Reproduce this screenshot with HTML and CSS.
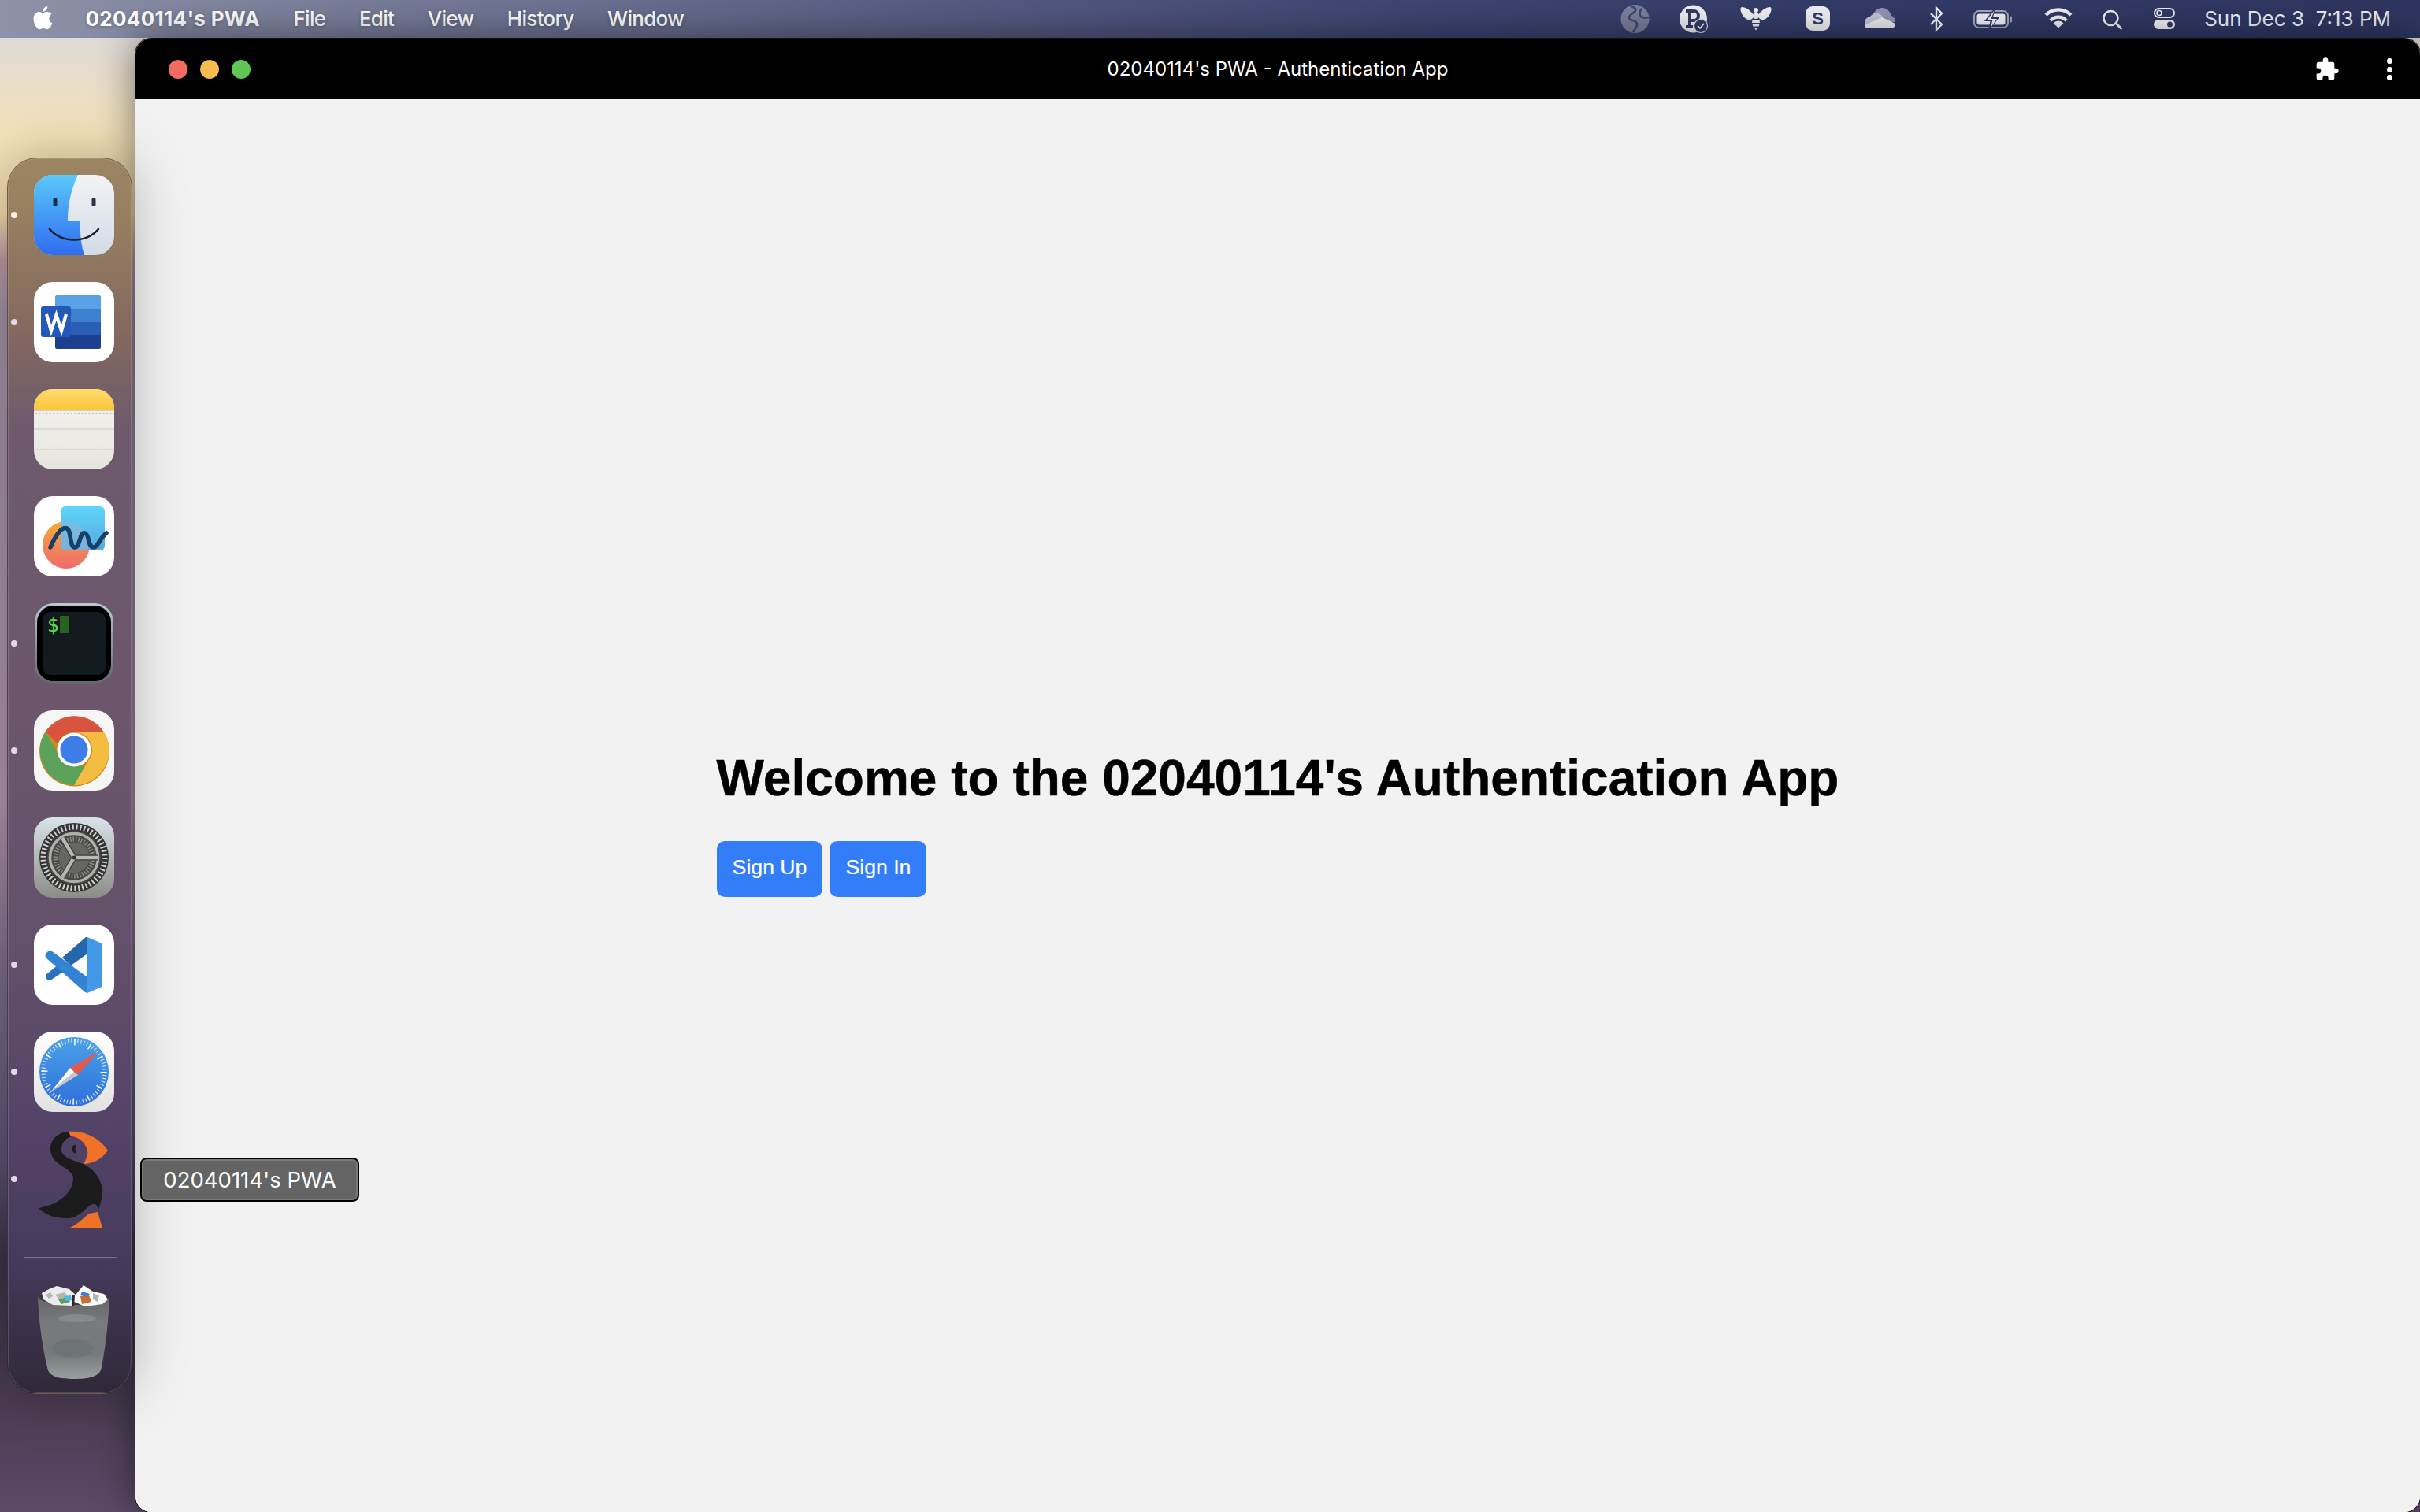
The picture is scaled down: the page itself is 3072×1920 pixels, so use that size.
FILE: index.html
```html
<!DOCTYPE html>
<html lang="en">
<head>
<meta charset="utf-8">
<title>02040114's PWA - Authentication App</title>
<link rel="stylesheet" href="styles.css">
</head>
<body>
<div class="desktop">
  <header class="menubar">
    <nav class="menu">
      <svg class="apple" viewBox="3.5 2.5 21.5 28"><path fill="#fff" d="M21.6 17c0-3.300 2.700-4.900 2.800-5-1.500-2.200-3.900-2.500-4.700-2.600-2-.2-3.900 1.200-4.900 1.200s-2.600-1.200-4.200-1.100c-2.200 0-4.200 1.300-5.300 3.200-2.300 3.900-.6 9.800 1.600 13 1.100 1.600 2.400 3.300 4.100 3.300 1.600-.1 2.300-1.100 4.200-1.100s2.500 1.100 4.200 1 2.800-1.600 3.900-3.200c1.200-1.800 1.700-3.600 1.800-3.700-.1 0-3.500-1.300-3.500-5zM18.400 7.400c.9-1.100 1.500-2.600 1.300-4.100-1.300.1-2.900.9-3.800 2-.8 1-1.500 2.500-1.300 4 1.500.1 2.900-.8 3.800-1.900z"/></svg>
      <span class="menu-app">02040114's PWA</span>
      <span>File</span><span>Edit</span><span>View</span><span>History</span><span>Window</span>
    </nav>
    <div class="tray">
      <svg class="t-globe" viewBox="0 0 37 48"><circle cx="18.5" cy="24" r="18" fill="#7a7f9c"/><path fill="none" stroke="#3f4770" stroke-width="2.500" d="M14 8c5 2 7 4 4 7s-8 4-7 8 9 2 10 7-3 6-5 11M27 11c-3 3-3 8-1 10s6 2 10 1"/></svg>
      <svg class="t-p" viewBox="0 0 38 48"><circle cx="18.5" cy="24" r="17.5" fill="#f0f0f4"/><path fill="none" stroke="#333b68" stroke-width="4" d="M14 33V14M9 14h10a6 6 0 0 1 0 12h-5M9 34h9"/><circle cx="28" cy="33" r="8.500" fill="#333b68" stroke="#d8d9e3" stroke-width="1.200"/><path fill="none" stroke="#f0f0f4" stroke-width="1.800" d="M24 33l3 3 5-6"/></svg>
      <svg class="t-bee" viewBox="0 0 40 48"><g fill="#f0f0f4"><path d="M17 19C13 13 7 9 2 9c-3 1-1 7 1 10 3 5 8 8 12 5 2-1 2-3 2-5zM23 19c4-6 10-10 15-10 3 1 1 7-1 10-3 5-8 8-12 5-2-1-2-3-2-5z"/><circle cx="20" cy="13" r="3"/><ellipse cx="20" cy="20" rx="3.800" ry="4"/><path d="M15.500 25h9l.5 4H15zM15.500 30.500h9l-.8 3h-7.400zM17.500 35h5L20 38.500z"/></g></svg>
      <svg class="t-s" viewBox="0 0 31 48"><rect y="8" width="31" height="31" rx="9" fill="#f0f0f4"/><text class="s-glyph" x="15.5" y="31">S</text></svg>
      <svg class="t-cloud" viewBox="0 0 40 48"><path fill="#9296b2" d="M10 24c1-8 7-14 13-14 6 0 10 4 12 10 3 1 5 4 5 8H10z"/><path fill="#c3c5d4" d="M4 34c-5-3-4-11 4-13 4-5 11-6 16 0l-9 12z"/><path fill="#e9eaf0" d="M6 36c-3 0-5-2-5-4l22-10 17 8c0 3-2 6-6 6z"/></svg>
      <svg class="t-bt" viewBox="0 0 18 48"><path fill="none" stroke="#f0f0f4" stroke-width="2.400" d="M2 17l14 14-7 7V10l7 7-14 14"/></svg>
      <svg class="t-bat" viewBox="0 0 50 48"><rect x="1" y="14" width="43" height="21" rx="6" fill="none" stroke="#a3a6bd" stroke-width="2"/><rect x="4.500" y="17.500" width="36" height="14" rx="3" fill="#eef0f5"/><path fill="#333b68" d="M28 9L14 27h7.500L18 41l15-19h-8z"/><path fill="#f0f0f4" d="M26.500 13.500L17.500 25h7l-2.500 10L30 24h-7.500z"/><rect x="46" y="20.500" width="3" height="8" rx="1.500" fill="#a3a6bd"/></svg>
      <svg class="t-wifi" viewBox="0 0 36 48"><g fill="none" stroke="#f0f0f4" stroke-width="4.200"><path d="M2 19A22.600 22.600 0 0 1 34 19"/><path d="M8 26A13.500 13.500 0 0 1 28 26"/></g><path fill="#f0f0f4" d="M18 35.500L11.500 29.500A8.500 8.500 0 0 1 24.500 29.500z"/></svg>
      <svg class="t-search" viewBox="0 0 27 48"><circle cx="11.5" cy="23" r="9" fill="none" stroke="#f0f0f4" stroke-width="2.500"/><path stroke="#f0f0f4" stroke-width="3" stroke-linecap="round" d="M18 29.500l6.500 6.500"/></svg>
      <svg class="t-ctl" viewBox="0 0 27 48"><rect x="1" y="11" width="25" height="11" rx="5.500" fill="none" stroke="#f0f0f4" stroke-width="2"/><circle cx="7" cy="16.500" r="3" fill="none" stroke="#f0f0f4" stroke-width="1.500"/><rect y="25" width="27" height="12" rx="6" fill="#f0f0f4"/><circle cx="20.5" cy="31" r="3.500" fill="#333b68"/></svg>
      <span class="clock">Sun Dec 3&nbsp; 7:13 PM</span>
    </div>
  </header>

  <section class="window">
    <div class="titlebar">
      <div class="lights"><i class="light red"></i><i class="light amber"></i><i class="light green"></i></div>
      <div class="wintitle">02040114's PWA - Authentication App</div>
      <div class="winactions">
        <svg class="puzzle" viewBox="0 0 24 24"><path fill="#fff" d="M20.500 11H19V7a2 2 0 0 0-2-2h-4V3.500a2.500 2.500 0 0 0-5 0V5H4a2 2 0 0 0-2 2v3.800h1.500a2.700 2.700 0 0 1 0 5.400H2V20a2 2 0 0 0 2 2h3.800v-1.500a2.700 2.700 0 0 1 5.400 0V22H17a2 2 0 0 0 2-2v-4h1.500a2.500 2.500 0 0 0 0-5z"/></svg>
        <div class="kebab"><i></i><i></i><i></i></div>
      </div>
    </div>
    <main class="content">
      <div class="welcome">
        <h1>Welcome to the 02040114's Authentication App</h1>
        <div class="actions"><button class="btn">Sign Up</button><button class="btn">Sign In</button></div>
      </div>
    </main>
  </section>

  <aside class="dock">
    <div class="app run first">
      <svg viewBox="0 0 102 102"><defs><linearGradient id="fb" x1="0" y1="0" x2="0" y2="1"><stop offset="0" stop-color="#5ac8fa"/><stop offset="1" stop-color="#2f6df0"/></linearGradient><linearGradient id="fw" x1="0" y1="0" x2="0" y2="1"><stop offset="0" stop-color="#f2f3f5"/><stop offset="1" stop-color="#d3dbe6"/></linearGradient><clipPath id="fc"><rect width="102" height="102" rx="24"/></clipPath></defs><g clip-path="url(#fc)"><rect width="102" height="102" fill="url(#fw)"/><path fill="url(#fb)" d="M0 0h56c-8 17-13 36-13 57q0 2 2 2h14v11q0 16 5 32H0z"/></g><rect x="24.500" y="29" width="5" height="11" rx="2.500" fill="#1f2f4a"/><rect x="73.500" y="29" width="5" height="11" rx="2.500" fill="#2c3445"/><path fill="none" stroke="#1c1c22" stroke-width="2.600" stroke-linecap="round" d="M20 69c16 18 46 18 62 0"/></svg>
    </div>
    <div class="app run">
      <svg viewBox="0 0 102 102"><rect width="102" height="102" rx="24" fill="#fff"/><path fill="#5aa0e6" d="M27 19a2 2 0 0 1 2-2h54a2 2 0 0 1 2 2v15H27z"/><rect x="27" y="34" width="58" height="17" fill="#3f7fcf"/><rect x="27" y="51" width="58" height="17" fill="#2a5db5"/><path fill="#1c3f8f" d="M27 68h58v15a2 2 0 0 1-2 2H29a2 2 0 0 1-2-2z"/><rect x="9" y="31" width="38" height="39" rx="3" fill="#2458b8"/><path fill="none" stroke="#fff" stroke-width="4.200" d="M16 41l6 21 6.500-20 6.500 20 6-21"/></svg>
    </div>
    <div class="app">
      <svg viewBox="0 0 102 102"><defs><linearGradient id="ny" x1="0" y1="0" x2="0" y2="1"><stop offset="0" stop-color="#fddc6e"/><stop offset="1" stop-color="#f8c63c"/></linearGradient><linearGradient id="nw" x1="0" y1="0" x2="0" y2="1"><stop offset="0" stop-color="#f6f5f2"/><stop offset="1" stop-color="#e6e4de"/></linearGradient><clipPath id="nc"><rect width="102" height="102" rx="24"/></clipPath></defs><g clip-path="url(#nc)"><rect width="102" height="102" fill="url(#nw)"/><rect width="102" height="26" fill="url(#ny)"/><rect y="26" width="102" height="1.500" fill="#c9b26c"/><path stroke="#bdbdb8" stroke-width="2" stroke-dasharray="2 2.500" d="M2 31h100"/><path stroke="#d8d6d0" stroke-width="1.500" d="M0 51h102M0 77h102"/></g></svg>
    </div>
    <div class="app">
      <svg viewBox="0 0 102 102"><defs><linearGradient id="bo" x1="0" y1="0" x2="0" y2="1"><stop offset="0" stop-color="#f5aa35"/><stop offset="1" stop-color="#ee6c6e"/></linearGradient><linearGradient id="bb" x1="0" y1="0" x2="0" y2="1"><stop offset="0" stop-color="#5fd6fb"/><stop offset="1" stop-color="#56a8de"/></linearGradient></defs><rect width="102" height="102" rx="24" fill="#fff"/><circle cx="41" cy="62" r="30" fill="url(#bo)"/><rect x="34" y="13" width="56" height="56" rx="6" fill="url(#bb)"/><path fill="#8cb6dc" opacity=".65" d="M34 33a30 30 0 0 1 36 27 30 30 0 0 1-2 9H40a6 6 0 0 1-6-6z"/><path fill="none" stroke="#173f68" stroke-width="5.500" stroke-linecap="round" stroke-linejoin="round" d="M21 65c6-14 14-27 21-24 6 3 3 24 10 24 7 0 6-21 13-18 6 2 3 18 11 18 5 0 8-12 16-18"/></svg>
    </div>
    <div class="app run">
      <svg viewBox="0 0 102 102"><defs><linearGradient id="tb" x1="0" y1="0" x2="0" y2="1"><stop offset="0" stop-color="#b6ccd2"/><stop offset="1" stop-color="#63666a"/></linearGradient></defs><rect x="1" y="0" width="100" height="102" rx="24" fill="url(#tb)"/><rect x="4" y="3" width="94" height="96" rx="21" fill="#000"/><rect x="11" y="11" width="80" height="80" rx="10" fill="#131b1e"/><text class="t-dollar" x="17" y="36">$</text><rect x="33" y="16" width="11" height="22" fill="#2a6320"/></svg>
    </div>
    <div class="app run">
      <svg viewBox="0 0 102 102"><rect width="102" height="102" rx="24" fill="#f6f6f6"/><circle cx="51.5" cy="52" r="44.5" fill="#c98a26"/><path fill="#d9533f" d="M15 27A44 44 0 0 1 89 28H51a22 22 0 0 0-21 14z"/><path fill="#5aa25a" d="M15 27L31 56a22 22 0 0 0 20 15h18L51 95a44 44 0 0 1-36-68z"/><path fill="#f3bd42" d="M89 28a44 44 0 0 1-38 67l18-31a22 22 0 0 0-18-36z"/><circle cx="51" cy="50" r="21.5" fill="#fff"/><circle cx="51" cy="50" r="17.500" fill="#3f7de8"/></svg>
    </div>
    <div class="app">
      <svg viewBox="0 0 102 102"><defs><linearGradient id="gb" x1="0" y1="0" x2="0" y2="1"><stop offset="0" stop-color="#d8e4e8"/><stop offset="1" stop-color="#8c8c88"/></linearGradient></defs><rect width="102" height="102" rx="24" fill="url(#gb)"/><circle cx="51" cy="51" r="44" fill="#333"/><circle cx="51" cy="51" r="39" fill="none" stroke="#cfcfcf" stroke-width="7" stroke-dasharray="2 2.900"/><circle cx="51" cy="51" r="34" fill="#484846"/><circle cx="51" cy="51" r="30.500" fill="none" stroke="#b0b0ae" stroke-width="3.500"/><circle cx="51" cy="51" r="23.500" fill="none" stroke="#8e8e8c" stroke-width="6" stroke-dasharray="1.500 2"/><circle cx="51" cy="51" r="19.500" fill="#666664"/><path fill="none" stroke="#3a3a38" stroke-width="7" d="M51 51L36 26M51 51L81 51M51 51L36 76"/><path fill="none" stroke="#b8b8b6" stroke-width="4.500" d="M51 51L36 26M51 51L81 51M51 51L36 76"/><circle cx="51" cy="51" r="2.500" fill="#333"/></svg>
    </div>
    <div class="app run">
      <svg viewBox="0 0 102 102"><rect width="102" height="102" rx="24" fill="#fff"/><path fill="#2468ac" d="M36 42L66 16h2v21L47 52z"/><path fill="#2a70bb" d="M15 64l22-18 9 8-25 17q-2 1-4-1l-2-3z"/><path fill="#3383d4" d="M15 37l4-4q2-1 4 1l45 33v20l-3-1-50-44q-1-2 0-5z"/><path fill="#4498e8" d="M68 16l16 7q3 1 3 4v49q0 3-3 4l-16 7z"/></svg>
    </div>
    <div class="app run">
      <svg viewBox="0 0 102 102"><defs><linearGradient id="sb" x1="0" y1="0" x2="0" y2="1"><stop offset="0" stop-color="#fff"/><stop offset="1" stop-color="#e2e2e2"/></linearGradient><linearGradient id="sc" x1="0" y1="0" x2="0" y2="1"><stop offset="0" stop-color="#4ba2e8"/><stop offset="1" stop-color="#2f6fdc"/></linearGradient></defs><rect width="102" height="102" rx="24" fill="url(#sb)"/><circle cx="51" cy="51" r="44" fill="url(#sc)"/><circle cx="51" cy="51" r="39" fill="none" stroke="#d8e8fa" stroke-width="5" stroke-dasharray="1.100 2.985"/><circle cx="51" cy="51" r="37.500" fill="none" stroke="#fff" stroke-width="8" stroke-dasharray="1.500 18.135"/><path fill="#e45a4a" d="M82 25L46 46l10 9z"/><path fill="#fff" d="M21 77l25-31 5 5z"/><path fill="#c9c9c9" d="M21 77l35-22-5-4z"/></svg>
    </div>
    <div class="app run tall">
      <svg class="puffin" viewBox="0 0 90 124"><path fill="#1b1b1b" d="M39 1C25 1 15 11 15 23c0 10 7 17 15 22 8 5 14 9 14 15 0 15-14 33-44 38 8 9 22 13 36 13s22-11 30-17c4-2 8-2 10 6 4-10 6-20 4-30-4-15-12-22-23-28-11-4-28-8-28-18 0-10 7-16 14-17 4 0 7 1 10 2-5-5-9-8-14-8z"/><path fill="#f07229" d="M39 1c21-2 41 11 49 24-6 9-18 17-31 17 5-8 7-14 4-20C58 14 50 7 41 7c-2-3-2-5-2-6z"/><path fill="#f07229" d="M40 123c10-5 18-13 24-18l11-2 6 20z"/><path fill="#1b1b1b" d="M48 17c-4 1-6 3-6 6s2 5 6 6c-2-4-2-8 0-12z"/></svg>
    </div>
    <hr class="sep">
    <div class="app trash">
      <svg viewBox="0 0 92 120"><defs><linearGradient id="tg" x1="0" y1="0" x2="0" y2="1"><stop offset="0" stop-color="#626466"/><stop offset=".3" stop-color="#787a7c"/><stop offset=".7" stop-color="#767a7a"/><stop offset="1" stop-color="#9a9fa0"/></linearGradient></defs><path fill="url(#tg)" d="M0 14c14 8 78 8 91 0-1 30-5 65-10 90-1 12-16 15-35 15s-33-3-34-15C6 80 1 44 0 14z"/><ellipse cx="46" cy="15" rx="45.500" ry="10" fill="#3a3a3c"/><path fill="#ececec" d="M5 10L14 5 24 1 40 5l9 8-6 13-24-1L7 18z"/><path fill="#fbfbfb" d="M46 21l2-9L58 0l12 8 14 3 5 7-7 6-22 3z"/><path fill="#b5b5b5" d="M22 12l12-3 6 7-12 3zM70 10l8 3-2 8-6-3zM10 12l6-3 3 5-5 3z"/><path fill="#5aa058" d="M26 18l12-3 3 6-11 3z"/><path fill="#4fb8e0" d="M33 14l9-1 1 6-8 1z"/><path fill="#d06a2c" d="M54 14l11-1 3 8-12 3z"/><path fill="#3a7fcf" d="M56 8l10 3-3 4-9-2z"/><path fill="#2a2a2c" d="M44 12l3 0-1 14-2 0z"/><ellipse cx="50" cy="42" rx="24" ry="5" fill="#a9acad" opacity=".35"/><ellipse cx="44" cy="80" rx="26" ry="12" fill="#5e6264" opacity=".3"/></svg>
    </div>
  </aside>
  <div class="tooltip">02040114's PWA</div>
</div>
</body>
</html>
```
FILE: styles.css
```css
html, body { margin: 0; padding: 0; height: 100%; }
body { font-family: "Liberation Sans", Arial, sans-serif; overflow: hidden; }
.desktop {
  position: relative; width: 3072px; height: 1920px; overflow: hidden;
  background: linear-gradient(180deg, #dedad6 48px, #f6e2bb 170px, #eed9a8 270px, #b797a0 330px, #9c8ca0 400px, #a58ea8 800px, #b090a8 1020px, #7a6a88 1224px, #5a5070 1470px, #3a3045 1600px, #4a3c52 1780px, #5b4a68 1920px);
}
.menubar {
  position: absolute; left: 0; top: 0; right: 0; height: 48px; box-sizing: border-box;
  display: flex; justify-content: space-between; align-items: center; padding: 0 37px 0 40px;
  background: linear-gradient(90deg, #8d92a8 0, #757b98 500px, #565c82 1200px, #3d4570 1800px, #333b68 2300px, #2e3660 3072px);
  color: #fff;
  font-family: Inter, sans-serif; font-size: 26px; font-weight: 500;
}
.menu { display: flex; align-items: center; gap: 42.5px; padding-bottom: 2px; text-shadow: 0 1px 4px rgba(0,0,0,.25); letter-spacing: -.7px; }
.apple { width: 28px; height: 32px; margin-right: -2px; }
.menu-app { font-weight: 700; letter-spacing: .3px; }
.tray { display: flex; align-items: center; height: 48px; color: #eef0f5; font-weight: 400; }
.tray svg { height: 48px; flex: none; display: block; }
.t-globe { width: 37px; }
.t-p { width: 38px; margin-left: 37px; }
.t-bee { width: 40px; margin-left: 40px; }
.t-s { width: 31px; margin-left: 43px; }
.t-cloud { width: 40px; margin-left: 43px; }
.t-bt { width: 18px; margin-left: 43px; }
.t-bat { width: 50px; margin-left: 38px; }
.t-wifi { width: 36px; margin-left: 40px; }
.t-search { width: 27px; margin-left: 37px; }
.t-ctl { width: 27px; margin-left: 39px; }
.clock { margin-left: 37px; white-space: pre; padding-bottom: 1px; }
.s-glyph { font-family: "Liberation Sans", sans-serif; font-size: 22px; font-weight: 700; fill: #333b68; text-anchor: middle; }

.window {
  position: absolute; left: 172px; top: 49px; right: 0; bottom: 0;
  display: flex; flex-direction: column;
  border-radius: 20px; overflow: hidden; background: #f2f2f2;
  box-shadow: 0 0 0 1px #111, 0 0 50px rgba(0,0,0,.5);
}
.titlebar {
  height: 77px; flex: none; background: #000; color: #fff;
  display: flex; align-items: center; position: relative;
  border-top: 1px solid #555; box-sizing: border-box;
}
.lights { display: flex; gap: 16px; margin-left: 42px; }
.light { width: 24px; height: 24px; border-radius: 50%; display: block; }
.red { background: #f26b5e; } .amber { background: #f5bd4f; } .green { background: #5fc655; }
.wintitle { position: absolute; left: 0; right: 0; text-align: center; font-family: Inter, sans-serif; font-size: 24px; padding-bottom: 1px; }
.winactions { margin-left: auto; display: flex; align-items: center; gap: 60px; margin-right: 35px; }
.puzzle { width: 32px; height: 32px; display: block; }
.kebab { display: flex; flex-direction: column; gap: 3.5px; }
.kebab i { width: 7px; height: 7px; background: #fff; border-radius: 50%; display: block; }
.content { flex: 1; display: flex; align-items: center; justify-content: center; background: #f2f2f2; }
.welcome h1 { font-size: 64px; margin: 43px 0; color: #000; font-weight: 700; -webkit-text-stroke: .5px #000; }
.actions { display: flex; gap: 9px; }
.btn {
  font-family: "Liberation Sans", Arial, sans-serif; font-size: 26.67px; color: #fff;
  background: #337ef8; border: 0; border-radius: 10px; padding: 18px 20px 22px; height: 71px; line-height: 31px;
  -webkit-text-stroke: .2px #fff;
}

.dock {
  position: absolute; left: 9px; top: 200px; width: 159px; height: 1570px; box-sizing: border-box;
  border-radius: 38px; border: 1px solid rgba(40,30,40,.4);
  background: linear-gradient(180deg, #9b8562 0, #987f60 70px, #83695f 220px, #6e5a6c 340px, #6b566c 700px, #63506a 1000px, #524267 1250px, #463a5a 1400px, #2f2839 1570px);
  box-shadow: inset 0 0 0 1px rgba(255,255,255,.15), 0 0 70px rgba(0,0,0,.26);
  display: flex; flex-direction: column; align-items: center; gap: 34px; padding-top: 21px;
}
.app { position: relative; width: 102px; height: 102px; flex: none; margin-left: 11px; }
.app svg { width: 102px; height: 102px; display: block; }
.app.run::before {
  content: ""; position: absolute; left: -29px; top: 47px; width: 8px; height: 8px;
  border-radius: 50%; background: #e4d6ea;
}
.app.first::before { background: #fff3e0; }
.app.tall { height: 122px; margin-top: -10px; }
.app.tall.run::before { top: 57px; }
.app svg.puffin { width: 90px; height: 124px; margin-left: 6px; }
.sep { width: 118px; height: 2px; border: 0; margin: 4px 0 0 1px; background: rgba(255,255,255,.3); flex: none; }
.app.trash { height: 120px; width: 92px; }
.app.trash svg { width: 92px; height: 120px; }
.t-dollar { font-family: "DejaVu Sans", sans-serif; font-size: 24px; fill: #5ad84a; }

.tooltip {
  position: absolute; left: 178px; top: 1470px; width: 278px; height: 56px; box-sizing: border-box;
  border: 2px solid #000; border-radius: 8px; background: #646464;
  box-shadow: inset 0 0 0 2px #7a7a7a; padding-bottom: 1px;
  color: #fff; font-family: Inter, sans-serif; font-size: 27.5px; display: flex; align-items: center; justify-content: center;
}
```
